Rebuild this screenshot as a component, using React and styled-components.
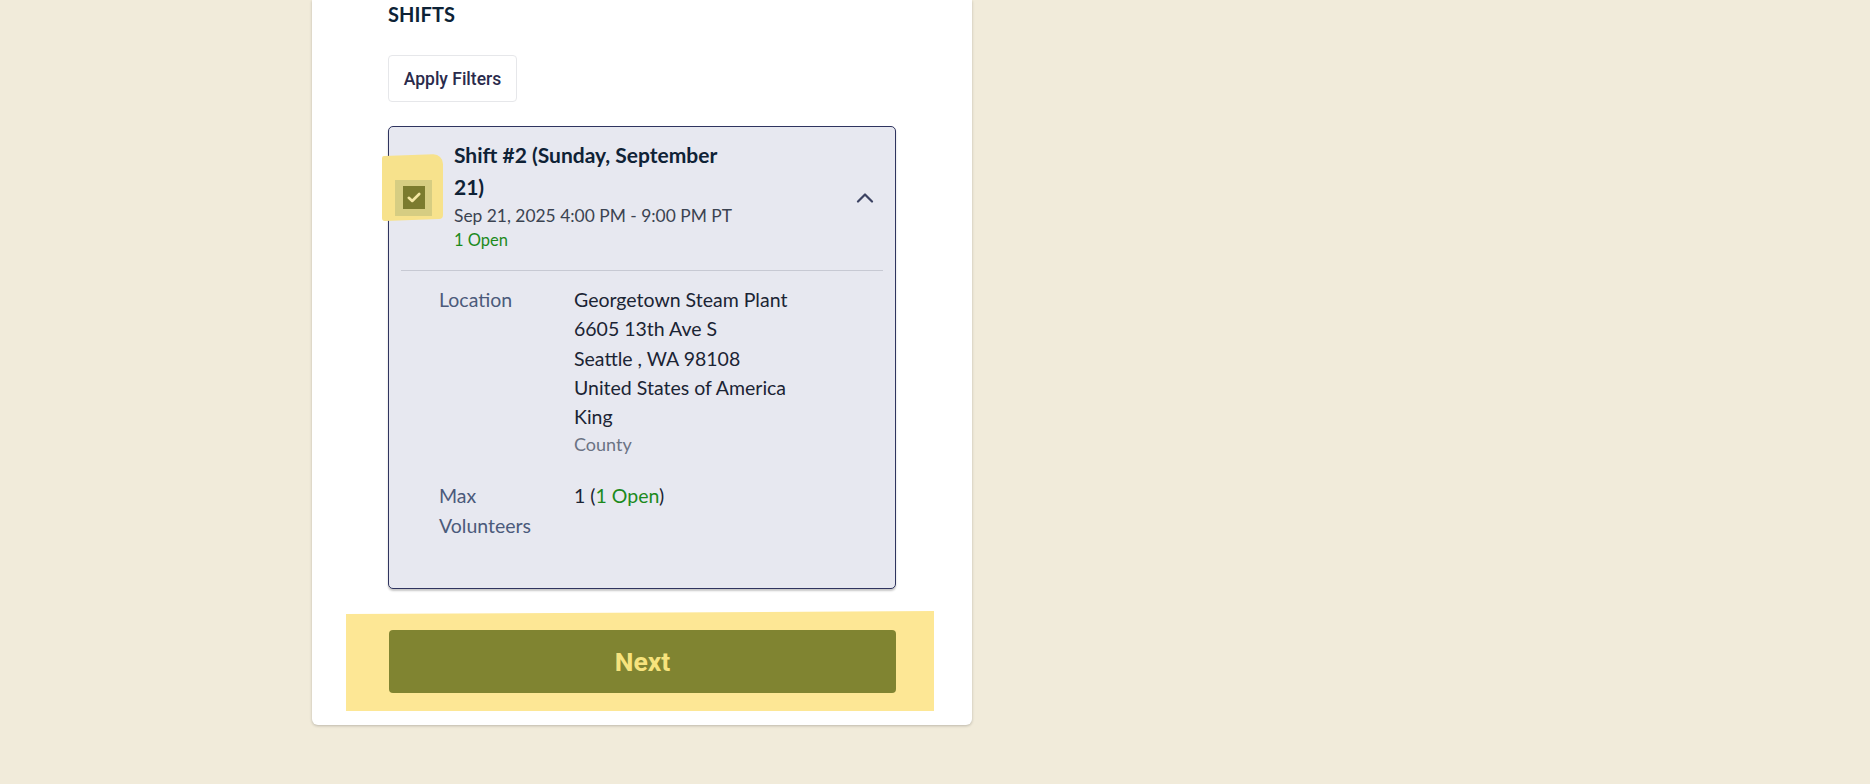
import React from "react";
import styled, { createGlobalStyle } from "styled-components";

const GlobalStyle = createGlobalStyle`
  html, body { margin: 0; padding: 0; }
  body {
    background: #f1ebda;
    font-family: "Lato", "Noto Sans", sans-serif;
    -webkit-font-smoothing: antialiased;
  }
`;

const Page = styled.div`
  width: 1870px;
  height: 784px;
  overflow: hidden;
  display: flex;
  align-items: flex-start;
  padding-left: 312px;
  box-sizing: border-box;
`;

const Panel = styled.section`
  width: 660px;
  box-sizing: border-box;
  background: #ffffff;
  border-radius: 0 0 6px 6px;
  box-shadow: 0 1px 3px rgba(0, 0, 0, 0.22);
  padding: 2px 76px 14px 76px;
  display: flex;
  flex-direction: column;
`;

const Heading = styled.h2`
  margin: 0;
  font-family: "Lato", sans-serif;
  font-weight: 700;
  font-size: 20px;
  line-height: 24px;
  color: #0d2236;
  letter-spacing: 0.1px;
`;

const FilterButton = styled.button`
  align-self: flex-start;
  margin-top: 29px;
  height: 47px;
  width: 129px;
  box-sizing: border-box;
  background: #ffffff;
  border: 1px solid #e6e7ea;
  border-radius: 4px;
  font-family: "Roboto", sans-serif;
  font-weight: 500;
  font-size: 17.5px;
  color: #2a2b4c;
  padding: 0 14px;
  cursor: pointer;
`;

const ShiftCard = styled.article`
  margin-top: 24px;
  background: #e7e8f0;
  border: 1px solid #2f345f;
  border-radius: 5px;
  box-shadow: 0 2px 2px rgba(0, 0, 0, 0.22);
  display: flex;
  flex-direction: column;
`;

const CardHeader = styled.div`
  display: flex;
  align-items: center;
  padding: 12px 20px 18px 6px;
`;

const Divider = styled.hr`
  margin: 0 12px;
  border: none;
  border-top: 1px solid #c7c9d3;
`;

const CheckSlot = styled.div`
  position: relative;
  width: 37px;
  height: 36px;
  flex: none;
  margin-top: 4px;
  &::before {
    content: "";
    position: absolute;
    left: -13px;
    top: -25px;
    width: 61px;
    height: 65px;
    background: #f7e28c;
    border-radius: 2px 10px 4px 3px;
    transform: skewY(-2deg);
  }
`;

const CheckRing = styled.div`
  position: relative;
  width: 37px;
  height: 36px;
  background: #d6cd82;
  display: flex;
  align-items: center;
  justify-content: center;
`;

const CheckBox = styled.div`
  width: 22px;
  height: 23px;
  background: #7b7b2e;
  display: flex;
  align-items: center;
  justify-content: center;
`;

const HeaderText = styled.div`
  flex: 1;
  margin-left: 22px;
  display: flex;
  flex-direction: column;
`;

const Title = styled.h3`
  margin: 0;
  max-width: 280px;
  font-family: "Lato", sans-serif;
  font-weight: 700;
  font-size: 21px;
  line-height: 32px;
  color: #0f2236;
`;

const DateLine = styled.div`
  font-size: 17.4px;
  line-height: 25px;
  color: #3b4351;
`;

const OpenLine = styled.div`
  font-size: 16.5px;
  line-height: 24px;
  color: #1c8a1c;
`;

const ToggleButton = styled.button`
  flex: none;
  background: none;
  border: none;
  padding: 0;
  width: 20px;
  height: 20px;
  display: flex;
  align-items: center;
  justify-content: center;
  color: #3c4262;
  cursor: pointer;
  margin-top: 4px;
`;

const Details = styled.dl`
  margin: 0;
  display: grid;
  grid-template-columns: 135px 1fr;
  row-gap: 23px;
  padding: 14px 16px 48px 50px;
`;

const Label = styled.dt`
  font-size: 19.5px;
  line-height: 29.3px;
  color: #4b5a7b;
  max-width: 105px;
`;

const Value = styled.dd`
  margin: 0;
  font-size: 19.5px;
  line-height: 29.3px;
  color: #1b2434;
  display: flex;
  flex-direction: column;
`;

const SubNote = styled.span`
  font-size: 18px;
  line-height: 27px;
  color: #6b7384;
`;

const Green = styled.span`
  color: #1c8a1c;
`;

const Highlight = styled.div`
  margin: 22px -38px 0 -42px;
  padding: 19px 38px 18px 43px;
  background: #fde795;
  clip-path: polygon(0 3px, 100% 0, 100% 100%, 0 100%);
`;

const NextButton = styled.button`
  width: 100%;
  height: 63px;
  border: none;
  border-radius: 4px;
  background: #808431;
  color: #f7e37d;
  font-family: "Roboto", sans-serif;
  font-weight: 700;
  font-size: 26.5px;
  cursor: pointer;
`;

const ChevronUp = () => (
  <svg width="18" height="11" viewBox="0 0 18 11" fill="none">
    <path d="M2 9.5 L9 2.5 L16 9.5" stroke="currentColor" strokeWidth="2.2" strokeLinecap="round" strokeLinejoin="round" />
  </svg>
);

const CheckMark = () => (
  <svg width="14" height="11" viewBox="0 0 14 11" fill="none">
    <path d="M1.8 5.8 L5.2 9 L12.2 2" stroke="#f4e7a2" strokeWidth="2.6" strokeLinecap="round" strokeLinejoin="round" />
  </svg>
);

export default function App() {
  return (
    <>
      <GlobalStyle />
      <Page>
        <Panel>
          <Heading>SHIFTS</Heading>
          <FilterButton>Apply Filters</FilterButton>
          <ShiftCard>
            <CardHeader>
              <CheckSlot>
                <CheckRing>
                  <CheckBox>
                    <CheckMark />
                  </CheckBox>
                </CheckRing>
              </CheckSlot>
              <HeaderText>
                <Title>Shift #2 (Sunday, September 21)</Title>
                <DateLine>Sep 21, 2025 4:00 PM - 9:00 PM PT</DateLine>
                <OpenLine>1 Open</OpenLine>
              </HeaderText>
              <ToggleButton aria-label="Collapse">
                <ChevronUp />
              </ToggleButton>
            </CardHeader>
            <Divider />
            <Details>
              <Label>Location</Label>
              <Value>
                <span>Georgetown Steam Plant</span>
                <span>6605 13th Ave S</span>
                <span>Seattle , WA 98108</span>
                <span>United States of America</span>
                <span>King</span>
                <SubNote>County</SubNote>
              </Value>
              <Label>Max Volunteers</Label>
              <Value>
                <span>
                  1 (<Green>1 Open</Green>)
                </span>
              </Value>
            </Details>
          </ShiftCard>
          <Highlight>
            <NextButton>Next</NextButton>
          </Highlight>
        </Panel>
      </Page>
    </>
  );
}
